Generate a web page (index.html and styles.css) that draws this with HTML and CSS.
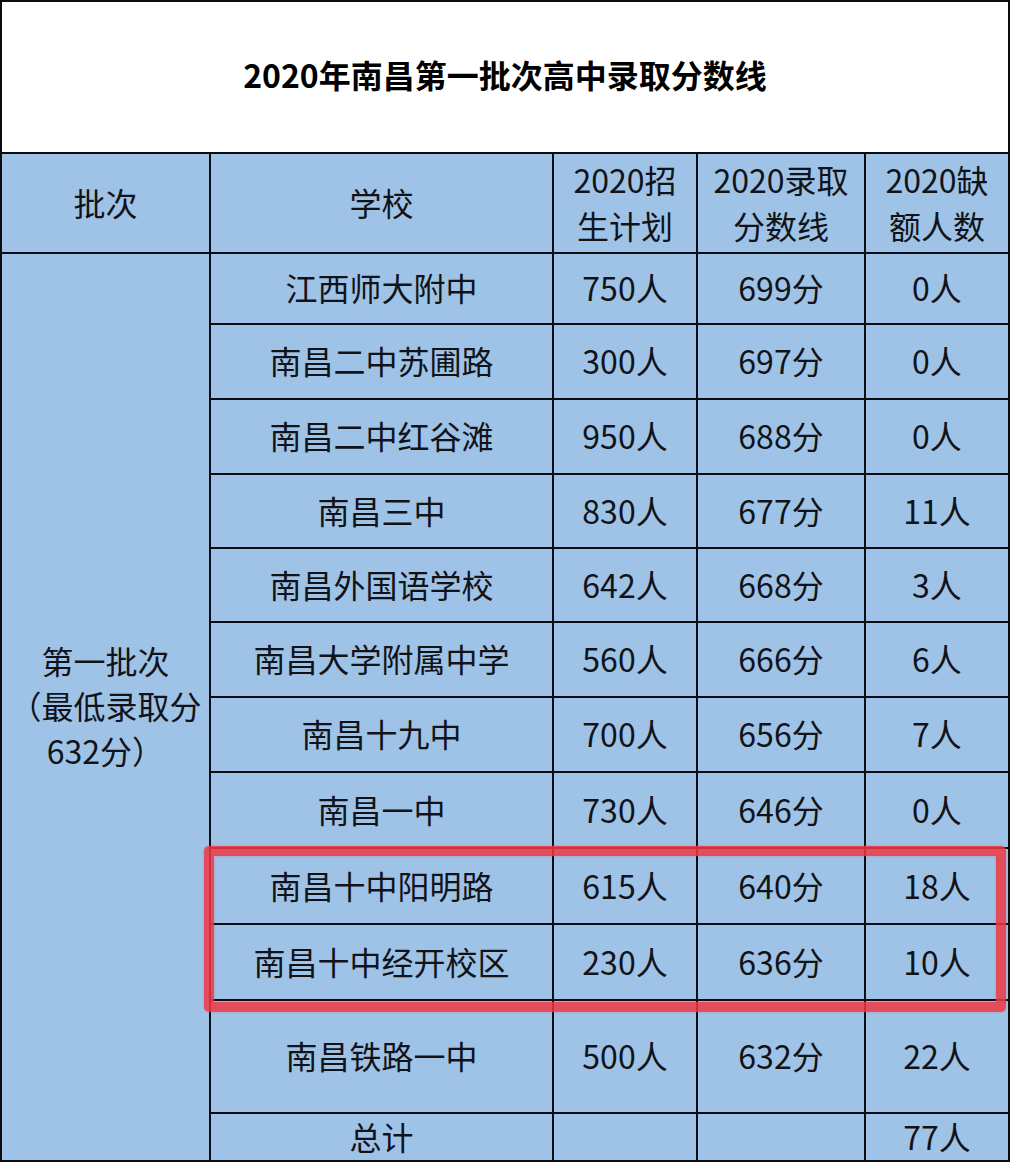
FILE: index.html
```html
<!DOCTYPE html>
<html lang="zh-CN">
<head>
<meta charset="utf-8">
<title>2020年南昌第一批次高中录取分数线</title>
<link rel="stylesheet" href="styles.css">
</head>
<body>
<div class="wrap">
  <div class="sheet">
    <div class="title">2020年南昌第一批次高中录取分数线</div>

    <div class="cell head">批次</div>
    <div class="cell head">学校</div>
    <div class="cell head">2020招<br>生计划</div>
    <div class="cell head">2020录取<br>分数线</div>
    <div class="cell head">2020缺<br>额人数</div>

    <div class="cell batch">第一批次<br>（最低录取分<br>632分）</div>

    <div class="cell">江西师大附中</div><div class="cell">750人</div><div class="cell">699分</div><div class="cell">0人</div>
    <div class="cell">南昌二中苏圃路</div><div class="cell">300人</div><div class="cell">697分</div><div class="cell">0人</div>
    <div class="cell">南昌二中红谷滩</div><div class="cell">950人</div><div class="cell">688分</div><div class="cell">0人</div>
    <div class="cell">南昌三中</div><div class="cell">830人</div><div class="cell">677分</div><div class="cell">11人</div>
    <div class="cell">南昌外国语学校</div><div class="cell">642人</div><div class="cell">668分</div><div class="cell">3人</div>
    <div class="cell">南昌大学附属中学</div><div class="cell">560人</div><div class="cell">666分</div><div class="cell">6人</div>
    <div class="cell">南昌十九中</div><div class="cell">700人</div><div class="cell">656分</div><div class="cell">7人</div>
    <div class="cell">南昌一中</div><div class="cell">730人</div><div class="cell">646分</div><div class="cell">0人</div>
    <div class="cell">南昌十中阳明路</div><div class="cell">615人</div><div class="cell">640分</div><div class="cell">18人</div>
    <div class="cell">南昌十中经开校区</div><div class="cell">230人</div><div class="cell">636分</div><div class="cell">10人</div>
    <div class="cell">南昌铁路一中</div><div class="cell">500人</div><div class="cell">632分</div><div class="cell">22人</div>
    <div class="cell">总计</div><div class="cell"></div><div class="cell"></div><div class="cell">77人</div>
  </div>
  <div class="highlight"></div>
</div>
</body>
</html>
```

FILE: styles.css
```css
html, body {
  margin: 0;
  padding: 0;
  background: #ffffff;
}

body {
  width: 1012px;
  height: 1162px;
  overflow: hidden;
  font-family: "Noto Sans CJK SC", "Noto Sans", sans-serif;
  color: #111318;
}

.wrap {
  position: relative;
  width: 1012px;
  height: 1162px;
}

.sheet {
  display: grid;
  width: 1006px;
  padding: 2px;
  gap: 2px;
  background: #0b0d12;
  grid-template-columns: 207px 341px 142px 166px 142px;
  grid-template-rows: 150px 98px 69px 73px 73px 72px 72px 73px 73px 74px 74px 74px 111px 46px;
}

.title {
  grid-column: 1 / -1;
  background: #ffffff;
  display: flex;
  align-items: center;
  justify-content: center;
  font-size: 32px;
  font-weight: 700;
  color: #000;
  padding-bottom: 6px;
}

.cell {
  background: #9fc3e6;
  display: flex;
  align-items: center;
  justify-content: center;
  text-align: center;
  font-size: 32px;
  line-height: 46px;
  white-space: nowrap;
  overflow: hidden;
  padding-bottom: 3px;
}

.head {
  line-height: 46px;
}

.batch {
  grid-column: 1;
  grid-row: 3 / span 12;
  line-height: 45px;
}

.highlight {
  position: absolute;
  left: 204px;
  top: 846px;
  width: 782px;
  height: 146px;
  border: 10px solid rgba(238, 56, 68, 0.86);
  border-radius: 5px;
  box-shadow: 0 0 2px rgba(240, 80, 90, 0.6), inset 0 0 2px rgba(240, 80, 90, 0.6);
}
```
